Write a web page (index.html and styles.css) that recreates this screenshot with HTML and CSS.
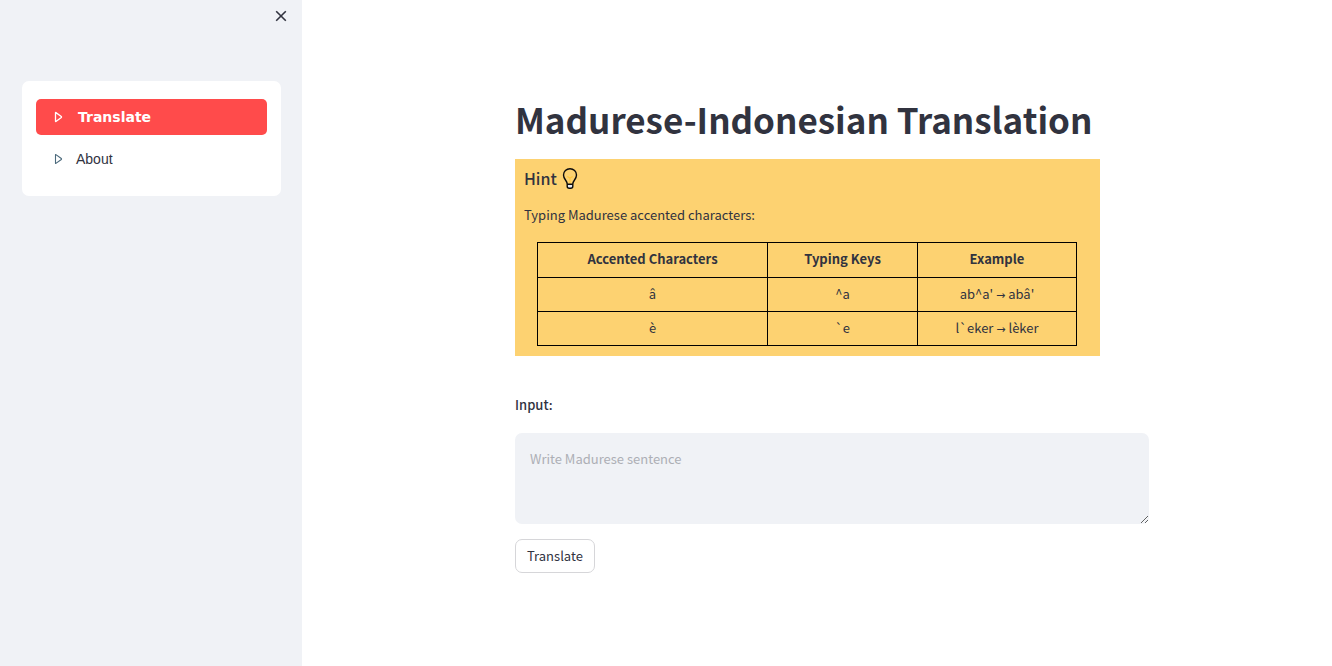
FILE: index.html
```html
<!DOCTYPE html>
<html lang="en">
<head>
<meta charset="utf-8">
<meta name="viewport" content="width=device-width, initial-scale=1">
<title>Madurese-Indonesian Translation</title>
<link rel="stylesheet" href="styles.css">
</head>
<body>
<div class="app">
  <aside class="sidebar">
    <button class="close" type="button" aria-label="Close sidebar">
      <svg viewBox="0 0 12 12" width="12" height="12" aria-hidden="true"><path d="M1.2 1.2 10.8 10.8M10.8 1.2 1.2 10.8" fill="none" stroke="currentColor" stroke-width="1.6"/></svg>
    </button>
    <nav class="menu">
      <a class="item active" href="#translate">
        <svg class="caret" viewBox="0 0 9 12" width="9" height="12" aria-hidden="true"><path d="M1.5 1.8v8.4q0 .5.4.2L7.3 6.5q.5-.5 0-1L1.9 1.6q-.4-.3-.4.2z" fill="none" stroke="currentColor" stroke-width="1.3"/></svg>
        <span>Translate</span>
      </a>
      <a class="item" href="#about">
        <svg class="caret" viewBox="0 0 9 12" width="9" height="12" aria-hidden="true"><path d="M1.5 1.8v8.4q0 .5.4.2L7.3 6.5q.5-.5 0-1L1.9 1.6q-.4-.3-.4.2z" fill="none" stroke="currentColor" stroke-width="1.1"/></svg>
        <span>About</span>
      </a>
    </nav>
  </aside>
  <main class="main">
    <h1 class="title">Madurese-Indonesian Translation</h1>
    <section class="hint">
      <h2 class="hint-title">Hint
        <svg viewBox="0 0 16 22" width="16" height="22" aria-hidden="true">
          <path d="M5 17.5h6v2q0 1.5-1.5 1.5h-3Q5 21 5 19.5z" fill="#e8eaf0"/>
          <path d="M5.3 9.5 8 11l2.700-1.500M8 11v5" fill="none" stroke="#ffc83d" stroke-width="1.200"/>
          <path d="M5.200 17C5.200 13.500 1.500 12.300 1.500 8a6.500 6.300 0 0 1 13 0C14.500 12.300 10.800 13.500 10.800 17V19.200q0 2-2 2H7.200q-2 0-2-2zM5.200 17.200h5.600" fill="none" stroke="#0b0b0b" stroke-width="1.400"/>
        </svg>
      </h2>
      <p class="hint-text">Typing Madurese accented characters:</p>
      <table class="keys">
        <colgroup><col class="col-chars"><col class="col-keys"><col class="col-example"></colgroup>
        <thead>
          <tr><th scope="col">Accented Characters</th><th scope="col">Typing Keys</th><th scope="col">Example</th></tr>
        </thead>
        <tbody>
          <tr><td>â</td><td>^a</td><td>ab^a' <span class="arrow">→</span> abâ'</td></tr>
          <tr><td>è</td><td>`e</td><td>l`eker <span class="arrow">→</span> lèker</td></tr>
        </tbody>
      </table>
    </section>
    <form class="form">
      <label class="label" for="sentence">Input:</label>
      <textarea class="text" id="sentence" placeholder="Write Madurese sentence"></textarea>
      <button class="submit" type="button">Translate</button>
    </form>
  </main>
</div>
</body>
</html>
```
FILE: styles.css
```css
* { box-sizing: border-box; }

body {
  margin: 0;
  background: #fff;
  color: #31333f;
  font: 13px/22px "Noto Sans CJK SC", "Noto Sans", sans-serif;
}

.app { display: flex; min-height: 100vh; }

.sidebar {
  flex: 0 0 302px;
  display: flex;
  flex-direction: column;
  padding: 10px 21px 24px 22px;
  background: #f0f2f6;
}

.close {
  align-self: flex-end;
  display: flex;
  margin-right: -6px;
  padding: 0;
  border: 0;
  background: none;
  color: #31333f;
}

.menu {
  display: flex;
  flex-direction: column;
  gap: 6px;
  margin-top: 59px;
  padding: 18px 14px 19px;
  border-radius: 7px;
  background: #fff;
}

.item {
  display: flex;
  align-items: center;
  gap: 13px;
  height: 36px;
  padding: 0 18px;
  border-radius: 5px;
  color: #31333f;
  font: 14px/22px "Liberation Sans", Arial, sans-serif;
  text-decoration: none;
}

.item.active {
  gap: 15px;
  background: #ff4b4b;
  color: #fff;
  font-family: "DejaVu Sans", sans-serif;
  font-weight: 700;
}

.caret { flex: none; color: #4c6a7c; }
.active .caret { color: #fff; }

.main {
  flex: 1;
  min-width: 0;
  padding: 95px 183px 90px 213px;
}

.title {
  margin: 0;
  font-size: 35px;
  line-height: 48px;
  font-weight: 700;
  white-space: nowrap;
}

.hint {
  max-width: 585px;
  margin-top: 16px;
  padding: 8px 9px 10px;
  background: #fdd271;
}

.hint-title {
  display: flex;
  align-items: center;
  gap: 5px;
  margin: 0;
  font-size: 16px;
  line-height: 22px;
  font-weight: 500;
}

.hint-text { margin: 15px 0 16px; }

.keys {
  width: calc(100% - 27px);
  margin: 0 13px;
  border-collapse: collapse;
  table-layout: fixed;
  text-align: center;
}

.col-chars { width: 230px; }
.col-keys { width: 150px; }
.col-example { width: 159px; }

.keys th, .keys td { padding: 5px 6px 7px; border: 1px solid #000; }
.keys th { font-weight: 700; }
.keys td { padding-bottom: 6px; }

.arrow {
  font-family: "DejaVu Sans", sans-serif;
  font-size: 11px;
  line-height: 1;
}

.form {
  display: flex;
  flex-direction: column;
  align-items: flex-start;
  margin-top: 38px;
}

.label { font-weight: 500; }

.text {
  width: 100%;
  height: 91px;
  margin: 17px 0 15px;
  padding: 15px;
  border: 0;
  border-radius: 7px;
  background: #f0f2f6;
  color: inherit;
  font: inherit;
  resize: vertical;
}

.text::placeholder { color: #adafb5; opacity: 1; }

.submit {
  height: 34px;
  padding: 0 11px;
  border: 1px solid #d6d6d9;
  border-radius: 7px;
  background: #fff;
  color: inherit;
  font: inherit;
}
```
